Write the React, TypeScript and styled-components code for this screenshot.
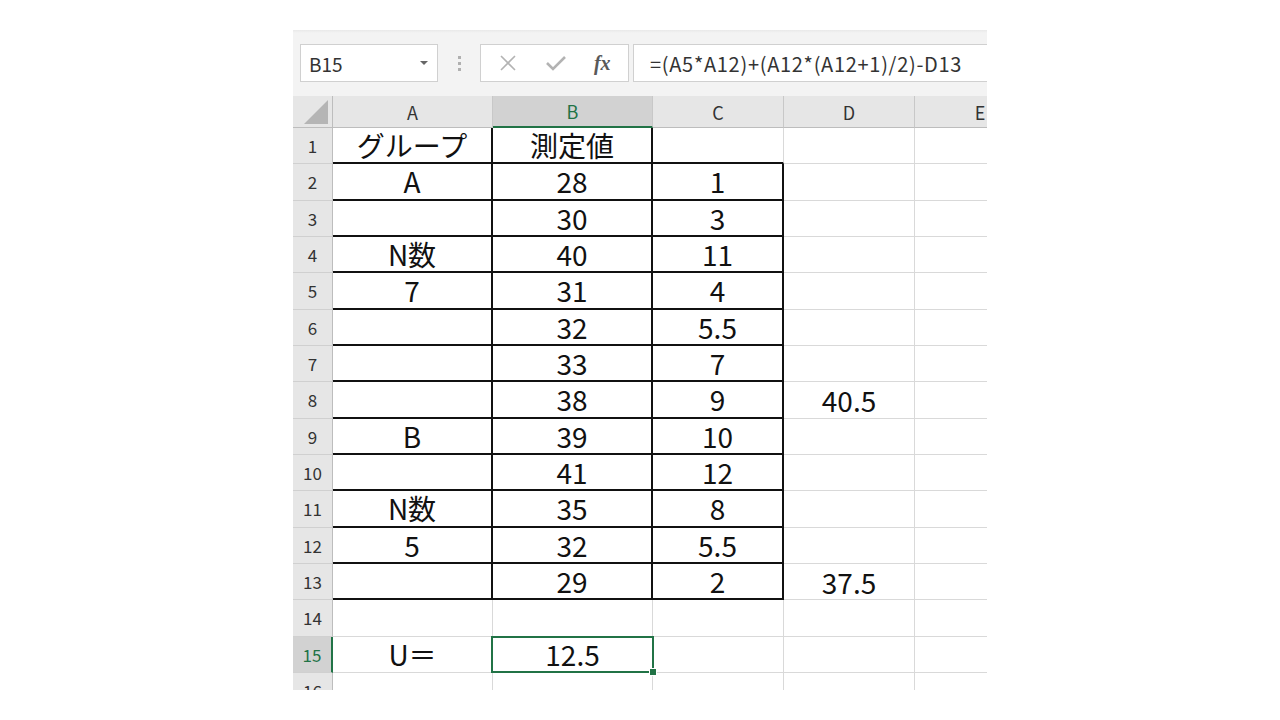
import React from "react";
import styled, { createGlobalStyle, css } from "styled-components";

const GlobalStyle = createGlobalStyle`
  html, body { margin: 0; padding: 0; background: #ffffff; }
  body { font-family: "Noto Sans CJK JP", "Noto Sans", sans-serif; }
`;

const Frame = styled.div`
  margin: 30px 0 0 293px;
  width: 694px;
  height: 660px;
  overflow: hidden;
  display: flex;
  flex-direction: column;
  background: #ffffff;
`;

const Toolbar = styled.div`
  height: 66px;
  flex: none;
  box-sizing: border-box;
  padding: 14px 0 0 7px;
  background: linear-gradient(#e9e9e9 0px, #f3f3f3 3px, #f3f3f3 100%);
  display: flex;
  align-items: flex-start;
`;

const NameBox = styled.div`
  width: 138px;
  height: 38px;
  box-sizing: border-box;
  background: #fff;
  border: 1px solid #d0d0d0;
  display: flex;
  align-items: center;
  justify-content: space-between;
  padding: 0 9px 0 8px;
  font-size: 19px;
  color: #333;
  flex: none;
`;

const Caret = styled.span`
  width: 0;
  height: 0;
  border-left: 4px solid transparent;
  border-right: 4px solid transparent;
  border-top: 4px solid #666;
`;

const Grip = styled.div`
  width: 42px;
  height: 38px;
  flex: none;
  display: flex;
  flex-direction: column;
  align-items: center;
  justify-content: center;
  gap: 3px;
`;

const GripDot = styled.span`
  width: 3px;
  height: 3px;
  background: #b0b0b0;
`;

const FxBox = styled.div`
  width: 149px;
  height: 38px;
  flex: none;
  box-sizing: border-box;
  background: #fff;
  border: 1px solid #d0d0d0;
  display: flex;
  align-items: center;
  justify-content: space-around;
  padding: 0 4px;
`;

const FxLabel = styled.span`
  font-family: "Liberation Serif", "DejaVu Serif", serif;
  font-style: italic;
  font-weight: bold;
  font-size: 20px;
  color: #595959;
`;

const FormulaBox = styled.div`
  margin-left: 4px;
  width: 400px;
  height: 38px;
  flex: none;
  box-sizing: border-box;
  background: #fff;
  border: 1px solid #d0d0d0;
  display: flex;
  align-items: center;
  padding-left: 16px;
  font-size: 20px;
  letter-spacing: 0.7px;
  color: #333;
  white-space: nowrap;
`;

const Sheet = styled.div`
  display: grid;
  grid-template-columns: 40px 160px 160px 131px 131px 131px;
  grid-template-rows: 32px;
  grid-auto-rows: 36.33px;
  flex: none;
`;

const Corner = styled.div`
  background: #e6e6e6;
  border-right: 1px solid #bdbdbd;
  border-bottom: 1px solid #bdbdbd;
  box-sizing: border-box;
  display: flex;
  align-items: flex-end;
  justify-content: flex-end;
  padding: 0 4px 3px 0;
`;

const ColHead = styled.div<{ $sel?: boolean }>`
  box-sizing: border-box;
  background: ${(p) => (p.$sel ? "#d2d2d2" : "#e6e6e6")};
  color: ${(p) => (p.$sel ? "#217346" : "#333")};
  border-right: 1px solid #c8c8c8;
  border-bottom: ${(p) => (p.$sel ? "2px solid #217346" : "1px solid #bdbdbd")};
  font-size: 18px;
  display: flex;
  align-items: center;
  justify-content: center;
`;

const RowHead = styled.div<{ $sel?: boolean }>`
  box-sizing: border-box;
  background: ${(p) => (p.$sel ? "#d2d2d2" : "#e6e6e6")};
  color: ${(p) => (p.$sel ? "#217346" : "#333")};
  border-right: ${(p) => (p.$sel ? "2px solid #217346" : "1px solid #bdbdbd")};
  border-bottom: 1px solid #d0d0d0;
  font-size: 17px;
  display: flex;
  align-items: center;
  justify-content: center;
`;

const Cell = styled.div<{ $bb?: boolean; $br?: boolean; $sel?: boolean }>`
  position: relative;
  box-sizing: border-box;
  border-right: ${(p) => (p.$br ? "2px solid #111" : "1px solid #d9d9d9")};
  border-bottom: ${(p) => (p.$bb ? "2px solid #111" : "1px solid #d9d9d9")};
  font-size: 28px;
  color: #111;
  display: flex;
  align-items: center;
  justify-content: center;
  line-height: 1;
  white-space: nowrap;
  ${(p) =>
    p.$sel &&
    css`
      &::after {
        content: "";
        position: absolute;
        left: -2px;
        top: -1px;
        right: -2px;
        bottom: -1px;
        border: 2px solid #217346;
      }
      &::before {
        content: "";
        position: absolute;
        right: -5px;
        bottom: -4px;
        width: 6px;
        height: 6px;
        background: #217346;
        border: 1px solid #fff;
        z-index: 1;
      }
    `}
`;

type Row = [string, string, string, string];

const rows: Row[] = [
  ["グループ", "測定値", "", ""],
  ["A", "28", "1", ""],
  ["", "30", "3", ""],
  ["N数", "40", "11", ""],
  ["7", "31", "4", ""],
  ["", "32", "5.5", ""],
  ["", "33", "7", ""],
  ["", "38", "9", "40.5"],
  ["B", "39", "10", ""],
  ["", "41", "12", ""],
  ["N数", "35", "8", ""],
  ["5", "32", "5.5", ""],
  ["", "29", "2", "37.5"],
  ["", "", "", ""],
  ["U＝", "12.5", "", ""],
  ["", "", "", ""],
];

const XIcon = () => (
  <svg width="20" height="20" viewBox="0 0 20 20">
    <path d="M3 3 L17 17 M17 3 L3 17" stroke="#b3b3b3" strokeWidth="1.6" fill="none" />
  </svg>
);

const CheckIcon = () => (
  <svg width="22" height="20" viewBox="0 0 22 20">
    <path d="M2 10 L8 16 L20 4" stroke="#b3b3b3" strokeWidth="2.6" fill="none" />
  </svg>
);

const CornerTriangle = () => (
  <svg width="24" height="24" viewBox="0 0 24 24">
    <path d="M24 0 L24 24 L0 24 Z" fill="#b5b5b5" />
  </svg>
);

export default function App() {
  return (
    <>
      <GlobalStyle />
      <Frame>
        <Toolbar>
          <NameBox>
            <span>B15</span>
            <Caret />
          </NameBox>
          <Grip>
            <GripDot />
            <GripDot />
            <GripDot />
          </Grip>
          <FxBox>
            <XIcon />
            <CheckIcon />
            <FxLabel>fx</FxLabel>
          </FxBox>
          <FormulaBox>=(A5*A12)+(A12*(A12+1)/2)-D13</FormulaBox>
        </Toolbar>
        <Sheet>
          <Corner>
            <CornerTriangle />
          </Corner>
          {["A", "B", "C", "D", "E"].map((c) => (
            <ColHead key={c} $sel={c === "B"}>
              {c}
            </ColHead>
          ))}
          {rows.map((r, i) => {
            const n = i + 1;
            const inTable = n <= 13;
            return (
              <React.Fragment key={n}>
                <RowHead $sel={n === 15}>{n}</RowHead>
                <Cell $bb={inTable} $br={inTable}>{r[0]}</Cell>
                <Cell $bb={inTable} $br={inTable} $sel={n === 15}>
                  {r[1]}
                </Cell>
                <Cell $bb={inTable} $br={inTable && n >= 2}>{r[2]}</Cell>
                <Cell>{r[3]}</Cell>
                <Cell />
              </React.Fragment>
            );
          })}
        </Sheet>
      </Frame>
    </>
  );
}
